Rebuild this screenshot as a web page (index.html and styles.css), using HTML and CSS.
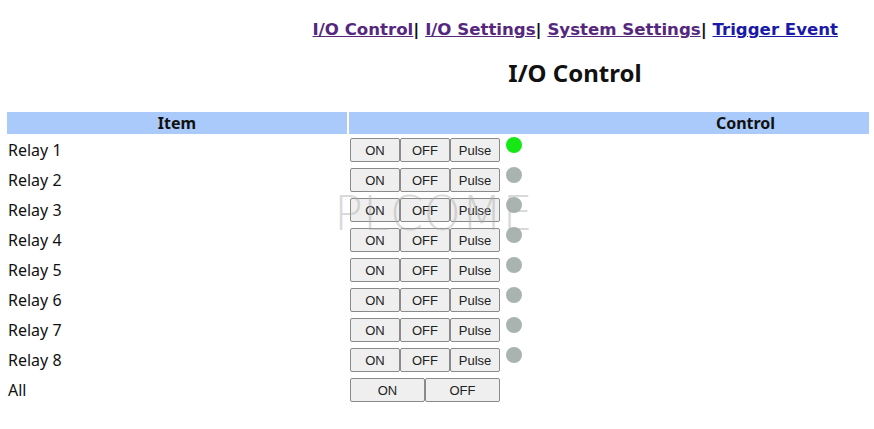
FILE: index.html
```html
<!DOCTYPE html>
<html lang="en">
<head>
    <meta charset="UTF-8">
    <title>I/O Control</title>
    <link rel="stylesheet" href="styles.css">
</head>
<body>
    <div id="page">
        <nav class="top-nav">
            <a href="#" class="visited">I/O Control</a>|
            <a href="#" class="visited">I/O Settings</a>|
            <a href="#" class="visited">System Settings</a>|
            <a href="#">Trigger Event</a>
        </nav>

        <h1 class="page-title">I/O Control</h1>

        <table class="io-table">
            <thead>
                <tr>
                    <th class="col-item">Item</th>
                    <th class="col-control">Control</th>
                </tr>
            </thead>
            <tbody>
                <tr>
                    <td>Relay 1</td>
                    <td><div class="controls"><button class="btn">ON</button><button class="btn">OFF</button><button class="btn">Pulse</button><span class="led on"></span></div></td>
                </tr>
                <tr>
                    <td>Relay 2</td>
                    <td><div class="controls"><button class="btn">ON</button><button class="btn">OFF</button><button class="btn">Pulse</button><span class="led"></span></div></td>
                </tr>
                <tr>
                    <td>Relay 3</td>
                    <td><div class="controls"><button class="btn">ON</button><button class="btn">OFF</button><button class="btn">Pulse</button><span class="led"></span></div></td>
                </tr>
                <tr>
                    <td>Relay 4</td>
                    <td><div class="controls"><button class="btn">ON</button><button class="btn">OFF</button><button class="btn">Pulse</button><span class="led"></span></div></td>
                </tr>
                <tr>
                    <td>Relay 5</td>
                    <td><div class="controls"><button class="btn">ON</button><button class="btn">OFF</button><button class="btn">Pulse</button><span class="led"></span></div></td>
                </tr>
                <tr>
                    <td>Relay 6</td>
                    <td><div class="controls"><button class="btn">ON</button><button class="btn">OFF</button><button class="btn">Pulse</button><span class="led"></span></div></td>
                </tr>
                <tr>
                    <td>Relay 7</td>
                    <td><div class="controls"><button class="btn">ON</button><button class="btn">OFF</button><button class="btn">Pulse</button><span class="led"></span></div></td>
                </tr>
                <tr>
                    <td>Relay 8</td>
                    <td><div class="controls"><button class="btn">ON</button><button class="btn">OFF</button><button class="btn">Pulse</button><span class="led"></span></div></td>
                </tr>
                <tr>
                    <td>All</td>
                    <td><div class="controls"><button class="btn wide">ON</button><button class="btn wide">OFF</button></div></td>
                </tr>
            </tbody>
        </table>

        <div class="watermark">PLCOME</div>
    </div>
</body>
</html>
```

FILE: styles.css
```css
html {
    overflow-x: hidden;
}

body {
    margin: 0 5px;
    font-family: "Noto Sans", "Open Sans", sans-serif;
    color: #111;
    background: #fff;
}

#page {
    position: relative;
    width: 1140px;
}

/* top navigation */
.top-nav {
    padding: 19px 307px 0 0;
    text-align: right;
    font-family: "DejaVu Sans", Verdana, sans-serif;
    font-weight: bold;
    font-size: 16.6px;
    line-height: 22px;
    color: #111;
}

.top-nav a {
    color: #1a1aa6;
}

.top-nav a.visited {
    color: #55287e;
}

.page-title {
    margin: 15px 0 0;
    text-align: center;
    font-size: 24px;
    line-height: 34px;
    font-weight: bold;
}

/* relay table */
.io-table {
    margin-top: 20px;
    border-spacing: 2px;
    width: 1139px;
}

.io-table th {
    background: #a9cafa;
    height: 22px;
    padding: 0;
    font-size: 16px;
    line-height: 22px;
}

.col-item {
    width: 340px;
}

.io-table td {
    height: 28px;
    padding: 0 1px;
    font-size: 16px;
    vertical-align: middle;
}

.controls {
    display: flex;
    align-items: flex-start;
}

.btn {
    width: 50px;
    height: 24px;
    margin: 0;
    padding: 0;
    font-family: "Liberation Sans", Arial, sans-serif;
    font-size: 13px;
    color: #222;
    background: #efefef;
    border: 1px solid #8a8a8a;
    border-radius: 2px;
}

.btn.wide {
    width: 75px;
}

.led {
    width: 16px;
    height: 16px;
    margin: -1px 0 0 6px;
    border-radius: 50%;
    background: #a9b4b1;
}

.led.on {
    background: #16e816;
}

/* photo watermark from the source image */
.watermark {
    position: absolute;
    left: 329px;
    top: 189px;
    font-family: "DejaVu Sans", sans-serif;
    font-weight: 200;
    font-size: 48px;
    line-height: 48px;
    color: rgba(170, 170, 170, 0.45);
    pointer-events: none;
}
```
